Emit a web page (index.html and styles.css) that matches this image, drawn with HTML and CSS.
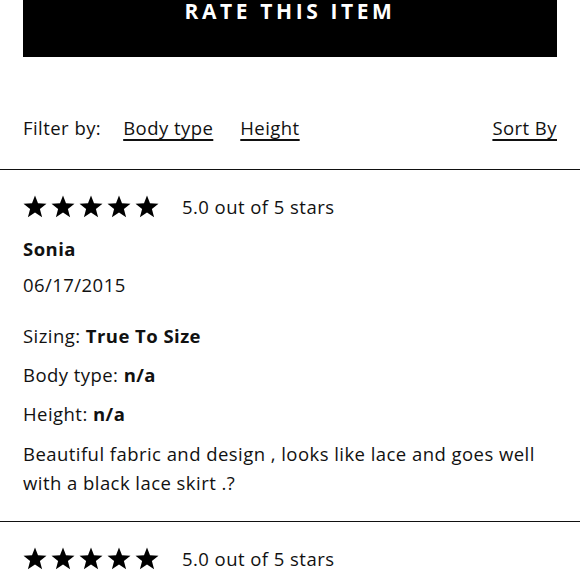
FILE: index.html
```html
<!DOCTYPE html>
<html>
<head>
<meta charset="utf-8">
<link rel="stylesheet" href="styles.css">
</head>
<body>
<div class="top">
  <div class="rate-btn">RATE THIS ITEM</div>
</div>
<div class="filter">
  <div class="filter-left">
    <span class="filter-label">Filter by:</span>
    <a class="link">Body type</a>
    <a class="link">Height</a>
  </div>
  <a class="link">Sort By</a>
</div>
<div class="review">
  <div class="rating">
    <div class="stars">
      <svg class="star" viewBox="0 0 24 23"><polygon points="12,0.5 15,8.3 23.5,8.7 16.9,14 19.1,22.3 12,17.6 4.9,22.3 7.1,14 0.5,8.7 9,8.3"/></svg>
      <svg class="star" viewBox="0 0 24 23"><polygon points="12,0.5 15,8.3 23.5,8.7 16.9,14 19.1,22.3 12,17.6 4.9,22.3 7.1,14 0.5,8.7 9,8.3"/></svg>
      <svg class="star" viewBox="0 0 24 23"><polygon points="12,0.5 15,8.3 23.5,8.7 16.9,14 19.1,22.3 12,17.6 4.9,22.3 7.1,14 0.5,8.7 9,8.3"/></svg>
      <svg class="star" viewBox="0 0 24 23"><polygon points="12,0.5 15,8.3 23.5,8.7 16.9,14 19.1,22.3 12,17.6 4.9,22.3 7.1,14 0.5,8.7 9,8.3"/></svg>
      <svg class="star" viewBox="0 0 24 23"><polygon points="12,0.5 15,8.3 23.5,8.7 16.9,14 19.1,22.3 12,17.6 4.9,22.3 7.1,14 0.5,8.7 9,8.3"/></svg>
    </div>
    <span class="rating-text">5.0 out of 5 stars</span>
  </div>
  <div class="name">Sonia</div>
  <div class="date">06/17/2015</div>
  <div class="attr attr-first">Sizing: <b>True To Size</b></div>
  <div class="attr">Body type: <b>n/a</b></div>
  <div class="attr">Height: <b>n/a</b></div>
  <p class="body-text">Beautiful fabric and design , looks like lace and goes well with a black lace skirt .?</p>
</div>
<div class="review">
  <div class="rating">
    <div class="stars">
      <svg class="star" viewBox="0 0 24 23"><polygon points="12,0.5 15,8.3 23.5,8.7 16.9,14 19.1,22.3 12,17.6 4.9,22.3 7.1,14 0.5,8.7 9,8.3"/></svg>
      <svg class="star" viewBox="0 0 24 23"><polygon points="12,0.5 15,8.3 23.5,8.7 16.9,14 19.1,22.3 12,17.6 4.9,22.3 7.1,14 0.5,8.7 9,8.3"/></svg>
      <svg class="star" viewBox="0 0 24 23"><polygon points="12,0.5 15,8.3 23.5,8.7 16.9,14 19.1,22.3 12,17.6 4.9,22.3 7.1,14 0.5,8.7 9,8.3"/></svg>
      <svg class="star" viewBox="0 0 24 23"><polygon points="12,0.5 15,8.3 23.5,8.7 16.9,14 19.1,22.3 12,17.6 4.9,22.3 7.1,14 0.5,8.7 9,8.3"/></svg>
      <svg class="star" viewBox="0 0 24 23"><polygon points="12,0.5 15,8.3 23.5,8.7 16.9,14 19.1,22.3 12,17.6 4.9,22.3 7.1,14 0.5,8.7 9,8.3"/></svg>
    </div>
    <span class="rating-text">5.0 out of 5 stars</span>
  </div>
</div>
</body>
</html>
```
FILE: styles.css
```css
html, body {
  margin: 0;
  padding: 0;
  background: #fff;
}
body {
  font-family: "Open Sans", "Liberation Sans", sans-serif;
  font-size: 18.5px;
  letter-spacing: 0.45px;
  color: #111;
  overflow: hidden;
}
.top {
  padding: 0 23px;
}
.rate-btn {
  background: #000;
  color: #fff;
  height: 57px;
  box-sizing: border-box;
  text-align: center;
  font-weight: 700;
  font-size: 21px;
  letter-spacing: 3.6px;
  line-height: 21px;
  padding-top: 1px;
}
.filter {
  display: flex;
  justify-content: space-between;
  align-items: center;
  padding: 59px 23px 29px;
  line-height: 24px;
  border-bottom: 1.5px solid #111;
}
.filter-left {
  display: flex;
  align-items: center;
}
.filter-label {
  margin-right: 22px;
}
.link {
  text-decoration: underline;
  text-decoration-thickness: 1.5px;
  text-underline-offset: 4px;
  margin-right: 27px;
}
.filter > .link {
  margin-right: 0;
}
.review {
  padding: 22px 23px 24px;
  border-bottom: 1.5px solid #111;
}
.rating {
  display: flex;
  align-items: center;
  height: 28px;
}
.stars {
  display: flex;
  gap: 4px;
  margin-right: 23px;
}
.star {
  width: 24px;
  height: 23px;
  fill: #000;
}
.name {
  font-weight: 700;
  line-height: 28px;
  margin-top: 15px;
}
.date {
  line-height: 28px;
  margin-top: 8px;
}
.attr {
  line-height: 28px;
  margin-top: 11px;
}
.attr-first {
  margin-top: 23px;
}
.attr b {
  font-weight: 700;
}
.body-text {
  margin: 11px 0 0;
  line-height: 29px;
}
```
